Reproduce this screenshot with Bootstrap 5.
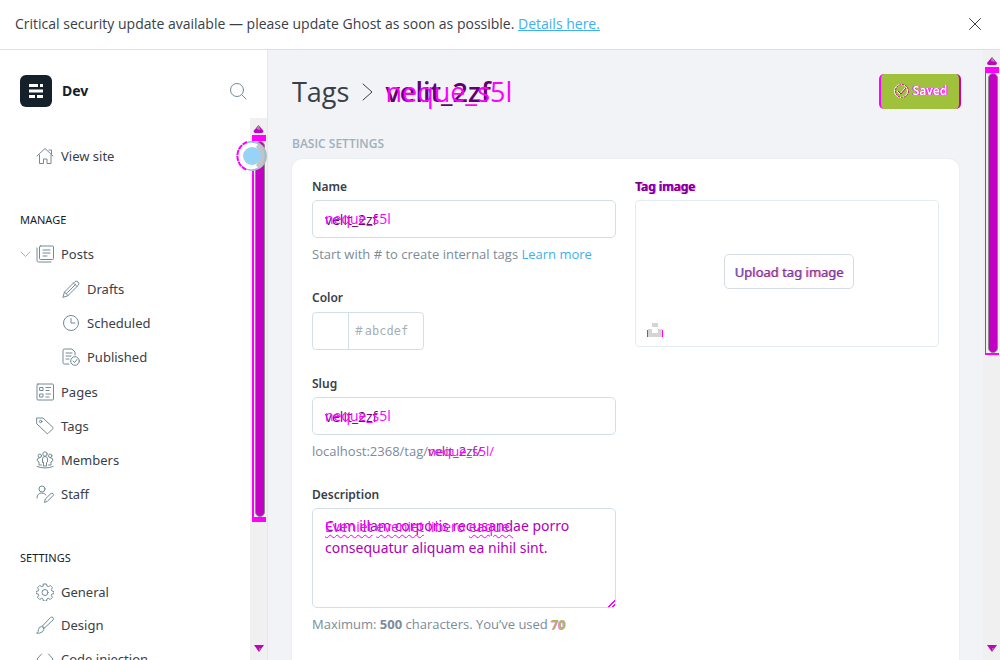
<!DOCTYPE html>
<html lang="en">
<head>
<meta charset="utf-8">
<meta name="viewport" content="width=device-width, initial-scale=1">
<title>Dev - Tags</title>
<link href="https://cdn.jsdelivr.net/npm/bootstrap@5.3.0/dist/css/bootstrap.min.css" rel="stylesheet">
<style>
:root { --ink: #394047; --line: #d3dfe6; --muted: #7c8b9a; --pink: #ff00ff; --plum: #b000b8; --blue: #3eb0ef; }
body { font-family: "Noto Sans", "Open Sans", sans-serif; font-size: 13px; line-height: 20px; color: var(--ink); background: #f1f3f7; }
a { text-decoration: none; }
svg { flex: none; }
.notice { height: 50px; border-bottom: 1px solid #dddfe4; padding: 0 16px 2px 15px; font-family: "Open Sans", sans-serif; font-size: 14px; }
.notice a { color: var(--blue); text-decoration: underline; }
.side { width: 268px; border-right: 1px solid #e3e6ee; flex: none; }
.brandrow { height: 68px; padding: 13px 20px 0 20px; }
.brandname { font-size: 14px; font-weight: 700; color: #15212a; margin-left: 2px; }
.logo { width: 32px; height: 32px; }
.iconbtn { background: none; border: 0; padding: 0; display: flex; }
.menu { padding: 21px 0 0 20px; min-width: 0; }
.menu a { display: flex; align-items: center; height: 34px; gap: 7px; padding-left: 16px; font-size: 13px; color: var(--ink); white-space: nowrap; }
.menu a svg { width: 18px; height: 18px; }
.menu .sub { margin: 1px 0; }
.menu .sub a { padding-left: 42px; }
.menu .parent a { padding-left: 0; }
.menu .parent .chev { width: 11px; height: 11px; margin-right: -2px; stroke: #a3b3bb; }
.menu h2 { font-size: 11px; line-height: 16px; font-weight: 400; margin: 39px 0 9px; color: #15212a; }
.menu h2 + a { margin-bottom: -1px; }
.ico { fill: none; stroke: #738a94; stroke-width: 1; stroke-linecap: round; stroke-linejoin: round; }
.bar { width: 17px; background: #f0f0f0; flex: none; }
.bar svg { width: 17px; height: 17px; }
.thumb { width: 14px; background: linear-gradient(90deg, #f0f 0 2px, #f0f0f0 2px 3px, #f0f0f0 13px); border: solid var(--pink); border-width: 6px 0 5px; }
.thumb div { height: 100%; width: 10px; margin-left: 3px; background: #c400c4; border: 1px solid #888; border-radius: 5px; }
.side .thumb { height: 387px; }
.main .thumb { height: 288px; border-bottom-width: 2px; }
.main .thumb { background: linear-gradient(90deg, #f0f 0 1px, #f0f0f0 1px 13px); }
.knob { position: absolute; left: 234px; top: 90px; width: 34px; height: 34px; }
.content { padding: 24px 22px 0 24px; min-width: 0; }
h1 { font-family: "Open Sans", sans-serif; font-size: 27px; line-height: 35px; font-weight: 500; margin: 0; color: var(--ink); }
.saved { width: 82px; height: 35px; margin-top: -1px; background: #9fc13b; border: 0; border-left: 2px solid var(--pink); border-right: 2px solid #d000a0; border-radius: 5px; color: #fff; font-size: 12px; font-weight: 600; text-shadow: 1px 0 var(--pink), -1px 0 var(--pink); padding: 0; }
.section { font-family: "Open Sans", sans-serif; font-size: 12px; line-height: 16px; font-weight: 600; color: #a0b0bb; margin: 27px 0 7px; }
.panel { background: #fff; border-radius: 10px 10px 0 0; margin-right: 2px; padding: 18px 20px 0; box-shadow: 0 0 2px #dfe2e8; display: grid; grid-template-columns: 1fr 1fr; gap: 19px; }
.caption { display: block; font-size: 12px; line-height: 20px; font-weight: 600; margin: 0 0 3px; color: var(--ink); }
.field { border: 1px solid var(--line); border-radius: 5px; padding: 8px 12px; height: 38px; width: 100%; font-family: "Open Sans", sans-serif; font-size: 14px; line-height: 20px; color: #760080; background: #fff; display: block; }
textarea.field { font-family: inherit; height: 100px; color: var(--plum); line-height: 22px; padding-top: 6px; resize: none; overflow: hidden; }
.hint { font-family: "Open Sans", sans-serif; font-size: 13px; line-height: 20px; color: var(--muted); margin: 6px 0 0; }
.group { margin-bottom: 24px; }
.stack { position: relative; }
.ghosted { position: absolute; left: 0; top: 0; color: var(--pink); white-space: nowrap; pointer-events: none; }
.field + .ghosted { left: 13px; top: 9px; font-family: "Open Sans", sans-serif; font-size: 14px; line-height: 20px; }
textarea + .ghosted { top: 7px; line-height: 22px; }
.wavy { text-decoration: underline wavy var(--pink) 1px; text-underline-offset: 2px; }
.grip { position: absolute; right: 1px; bottom: 1px; width: 10px; height: 10px; background: repeating-linear-gradient(135deg, var(--pink) 0 1px, transparent 1px 3px); clip-path: polygon(100% 0, 100% 100%, 0 100%); }
.color { display: flex; width: 112px; height: 38px; border: 1px solid var(--line); border-radius: 4px; align-items: center; margin-top: 4px; }
.color .swatch { width: 36px; height: 36px; border-right: 1px solid var(--line); margin-right: 6px; }
.color input { font-family: "DejaVu Sans Mono", monospace; font-size: 12px; width: 52px; border: 0; padding: 0; margin-left: 2px; background: transparent; }
.color input::placeholder, .color .hash { color: #a3b0ba; opacity: 1; font-size: 12px; }
.drop { height: 147px; border: 1px solid #e3ecf3; border-radius: 4px; }
.upload { width: 130px; height: 35px; padding: 0; margin: 0 0 4px 4px; border: 1px solid #d5dce2; border-radius: 5px; background: #fff; font-size: 13px; color: #74407c; text-shadow: 1px 0 #ff00ff99; }
.unsplash { position: absolute; left: 11px; bottom: 8px; width: 16px; height: 16px; }
.used { color: #9fbb58; text-shadow: -1px 1px #ff00ff88; }
</style>
</head>
<body class="vh-100 d-flex flex-column overflow-hidden">
<div class="notice bg-white d-flex align-items-center justify-content-between flex-shrink-0">
  <div>Critical security update available — please update Ghost as soon as possible. <a href="#">Details here.</a></div>
  <button class="iconbtn" type="button" aria-label="Close"><svg class="ico" width="18" height="18" viewBox="0 0 18 18" style="stroke:#394047"><path d="M3.500 3.500l11 11M14.500 3.500l-11 11"/></svg></button>
</div>
<div class="d-flex flex-fill overflow-hidden">
  <aside class="side bg-white d-flex flex-column position-relative">
    <div class="brandrow d-flex align-items-center justify-content-between flex-shrink-0">
      <div class="d-flex align-items-center gap-2">
        <svg class="logo" viewBox="0 0 32 32"><rect width="32" height="32" rx="6" fill="#15212a"/><path d="M9 9h9v3H9zM20 9h3v3h-3zM9 14.500h14v3H9zM9 20h6v3H9zM17 20h6v3h-6z" fill="#fff"/></svg>
        <span class="brandname">Dev</span>
      </div>
      <button class="iconbtn" type="button" aria-label="Search"><svg class="ico" width="18" height="18" viewBox="0 0 18 18"><circle cx="8" cy="8" r="6.500"/><path d="M12.700 12.700L17 17"/></svg></button>
    </div>
    <div class="d-flex flex-fill overflow-hidden">
      <nav class="menu flex-fill">
        <a href="#"><svg class="ico" viewBox="0 0 18 18"><path d="M1 9l8-7.500L17 9M3.500 8v8.500h4V12h3.500v4.500h4V8M13 3h2.500v4"/></svg>View site</a>
        <h2>MANAGE</h2>
        <div class="parent"><a href="#"><svg class="ico chev" viewBox="0 0 11 11"><path d="M1 3l4.500 4.500L10 3"/></svg><svg class="ico" viewBox="0 0 18 18"><rect x="3.500" y="1" width="14" height="13.500" rx="1"/><path d="M1 3v12.500q0 1.500 1.500 1.500H15M7 5h7M7 8h7M7 11h4"/></svg>Posts</a></div>
        <div class="sub">
          <a href="#"><svg class="ico" viewBox="0 0 18 18"><path d="M1 17l1.500-5L13 1.500q1.500-1 3 .5t.5 3L6 15.500zM2.500 12L6 15.500M11.500 3L15 6.500M4.500 13.500l9-9"/></svg>Drafts</a>
          <a href="#"><svg class="ico" viewBox="0 0 18 18"><circle cx="9" cy="9" r="7.500"/><path d="M9 4.500V9h4"/></svg>Scheduled</a>
          <a href="#"><svg class="ico" viewBox="0 0 18 18"><path d="M7 16H2.500Q1 16 1 14.500v-12Q1 1 2.500 1H10l3 3v3M4 5h6M4 8h5M4 11h3"/><circle cx="13" cy="13" r="4.300"/><path d="M11 13l1.500 1.500 2.500-3"/></svg>Published</a>
        </div>
        <a href="#"><svg class="ico" viewBox="0 0 18 18"><rect x="1" y="1" width="16.500" height="16" rx="1"/><path d="M4 4.500h3v3H4zM4 11h3v3H4zM10 4.500h4.500M10 7.500h3M10 11h4.500M10 14h3"/></svg>Pages</a>
        <a href="#"><svg class="ico" viewBox="0 0 18 18"><path d="M1 1h6l10 9.500q.5.500 0 1l-5 5q-.5.500-1 0L1 7z"/><circle cx="4.700" cy="4.500" r="1.200"/></svg>Tags</a>
        <a href="#"><svg class="ico" viewBox="0 0 18 18"><circle cx="9" cy="3" r="2.200"/><circle cx="3.800" cy="4.800" r="1.700"/><circle cx="14.200" cy="4.800" r="1.700"/><path d="M6.500 11V8q0-2.500 2.500-2.500T11.500 8v3l-1 .5V15h-3v-3.500zM5.500 14H3v-3l-2-1.500Q1 6.500 4 6.500M12.500 14H15v-3l2-1.500Q17 6.500 14 6.500M1 15.500q8 3 16 0"/></svg>Members</a>
        <a href="#"><svg class="ico" viewBox="0 0 18 18"><circle cx="6" cy="4" r="3"/><path d="M1 13q0-5 5-5 2.500 0 4 2M8.500 17l.8-3L15 8.500q1-.8 2 .2t0 2l-5.500 5.500z"/></svg>Staff</a>
        <h2>SETTINGS</h2>
        <a href="#"><svg class="ico" viewBox="0 0 18 18"><path d="M7.500 1h3l.6 2.200 1.200.5 2-1.200 2.200 2.200-1.200 2 .5 1.200 2.200.6v2l-2.200.6-.5 1.200 1.200 2-2.200 2.200-2-1.200-1.200.5-.6 2.200h-3l-.6-2.200-1.200-.5-2 1.200-2.200-2.200 1.200-2-.5-1.200L0 10.500v-2l2.200-.6.5-1.200-1.200-2 2.200-2.200 2 1.200 1.200-.5z"/><circle cx="9" cy="9.500" r="3"/></svg>General</a>
        <a href="#"><svg class="ico" viewBox="0 0 18 18"><path d="M6.500 10L14.500 1.500q1.500-1 2.500 0t0 2.500L8.500 12M6.500 10L8.500 12M1 17q1.500-1 1.500-3.500t3-3q2.500.5 2.300 3T4 17z"/></svg>Design</a>
        <a href="#"><svg class="ico" viewBox="0 0 18 18"><path d="M5.500 4L1 9l4.500 5M12.500 4L17 9l-4.500 5"/></svg>Code injection</a>
      </nav>
      <div class="bar d-flex flex-column align-items-center">
        <svg viewBox="0 0 17 17"><path d="M8.500 7l5 6q0 2-2 2h-6q-2 0-2-2z" fill="#c400c4"/><path d="M8.500 7l2 5-4-1z" fill="#999"/></svg>
        <div class="thumb"><div></div></div>
        <svg class="mt-auto" viewBox="0 0 17 17"><path d="M4 2h10l-5 7z" fill="#c400c4"/><path d="M9 5h2l-2 3z" fill="#888"/></svg>
      </div>
    </div>
    <svg class="knob" viewBox="0 0 34 34"><circle cx="18" cy="16" r="15" fill="#bbb"/><circle cx="16" cy="16" r="14" fill="#fff"/><circle cx="17" cy="16" r="14" fill="none" stroke="#7fc4ea"/><path d="M13 2a15 15 0 0 0 0 28" fill="none" stroke="#f0f" stroke-width="2" stroke-dasharray="5 1"/><path d="M24 5q8 11 0 22" fill="none" stroke="#c4c4c4" stroke-width="5"/><circle cx="18" cy="16" r="9" fill="#97d3f6"/></svg>
  </aside>
  <main class="main d-flex flex-fill overflow-hidden">
    <div class="content flex-fill d-flex flex-column">
      <div class="d-flex justify-content-between align-items-center">
        <h1 class="d-flex align-items-center">Tags<svg class="ico mx-2" width="20" height="20" viewBox="0 0 20 20"><path d="M6 2l9 8-9 8" style="stroke:#394047"/></svg><span class="stack fw-semibold" style="color:#63006f"><span class="ghosted fw-normal" aria-hidden="true">neque_s5l</span>velit_2zf</span></h1>
        <button class="saved d-flex align-items-center justify-content-center gap-1" type="button"><svg width="16" height="16" viewBox="0 0 16 16" fill="none" stroke="#fff"><circle cx="8" cy="8" r="6.500"/><circle cx="9" cy="8" r="6.500" stroke="#d000a0" stroke-dasharray="2 1"/><path d="M4 8l3 3 5-6"/><path d="M5 8l3 3 5-6" stroke="#d000a0"/></svg>Saved</button>
      </div>
      <h2 class="section">BASIC SETTINGS</h2>
      <form class="panel flex-fill">
        <div>
          <div class="group"><label class="caption" for="name">Name</label>
            <div class="stack"><input class="field" id="name" value="velit_2zf"><span class="ghosted" aria-hidden="true">neque_s5l</span></div>
            <p class="hint">Start with # to create internal tags <a href="#" style="color:#3eb0ef">Learn more</a></p></div>
          <div class="group"><label class="caption" for="hex">Color</label>
            <div class="color"><span class="swatch"></span><span class="hash">#</span><input id="hex" placeholder="abcdef"></div></div>
          <div class="group"><label class="caption" for="slug">Slug</label>
            <div class="stack"><input class="field" id="slug" value="velit_2zf"><span class="ghosted" aria-hidden="true">neque_s5l</span></div>
            <p class="hint">localhost:2368/tag/<span class="stack d-inline-block" style="color:#80308a"><span class="ghosted" aria-hidden="true">neque_s5l/</span>velit_2zf/</span></p></div>
          <div><label class="caption" for="desc">Description</label>
            <div class="stack"><textarea class="field" id="desc" spellcheck="false">Cum illam corporis recusandae porro consequatur aliquam ea nihil sint.</textarea><span class="ghosted" aria-hidden="true"><span class="wavy">Eveniet</span> <span class="wavy">eveniet</span> libero <span class="wavy">eaque.</span></span><i class="grip"></i></div>
            <p class="hint">Maximum: <b>500</b> characters. You’ve used <b class="used">70</b></p></div>
        </div>
        <div>
          <span class="caption" style="color:#76007c;text-shadow:1px 0 #f0f">Tag image</span>
          <div class="drop stack d-flex align-items-center justify-content-center">
            <button class="upload" type="button">Upload tag image</button>
            <svg class="unsplash" viewBox="0 0 16 16"><path d="M5 1h6v4H5zM1 7h4v4h6V7h4v8H1z" fill="#d4d4d4"/><path d="M.5 8v7M15.500 8v7" stroke="#f0f"/></svg>
          </div>
        </div>
      </form>
    </div>
    <div class="bar d-flex flex-column align-items-center">
      <svg viewBox="0 0 17 17"><path d="M9 7l5 6q0 2-2 2H6q-2 0-2-2z" fill="#c400c4"/><path d="M9 7l3 5-4-1z" fill="#999"/></svg>
      <div class="thumb"><div></div></div>
      <svg class="mt-auto" viewBox="0 0 17 17"><path d="M4 2h10l-5 7z" fill="#c400c4"/><path d="M9 5h2l-2 3z" fill="#888"/></svg>
    </div>
  </main>
</div>
<script src="https://cdn.jsdelivr.net/npm/bootstrap@5.3.0/dist/js/bootstrap.bundle.min.js"></script>
</body>
</html>
